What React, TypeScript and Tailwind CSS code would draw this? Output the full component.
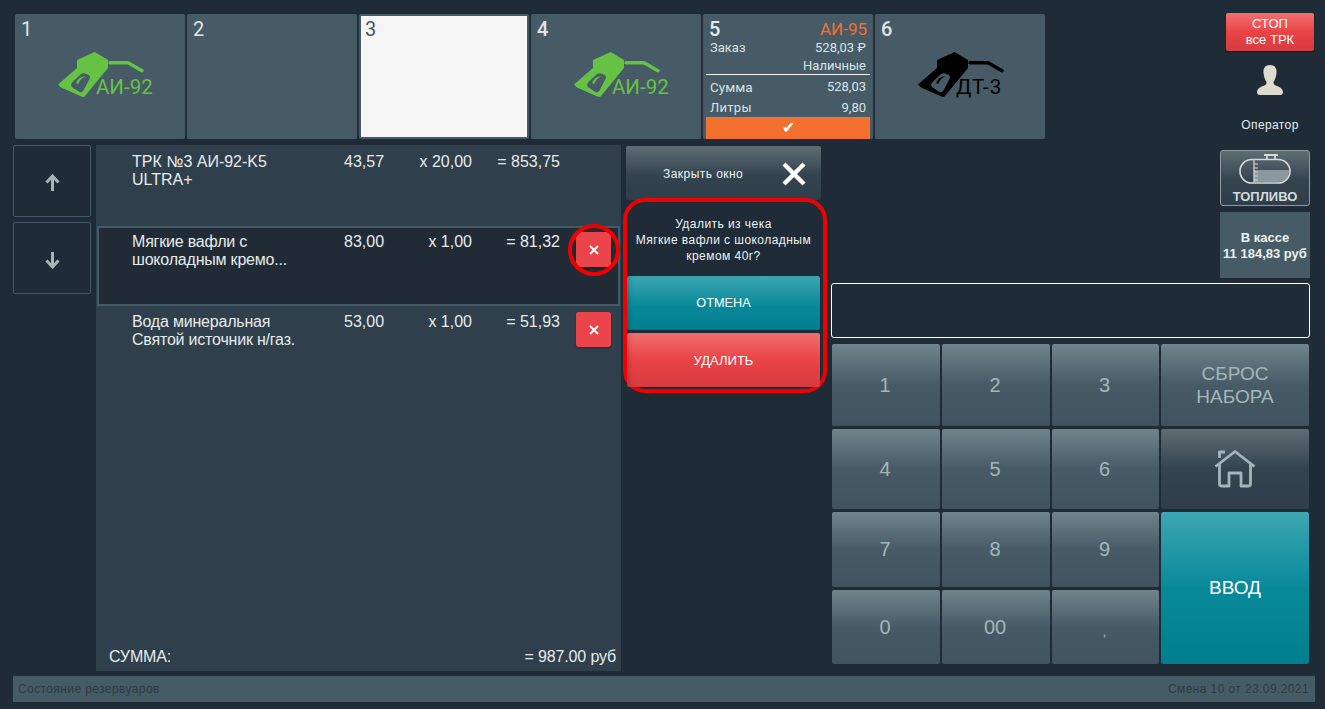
import React from "react";

const numBtn =
  "flex items-center justify-center rounded-[2px] bg-[linear-gradient(180deg,#70848b_0%,#465b66_50%,#40535f_100%)] pr-[2px] text-[#a3b6ba] text-[20px]";

function Nozzle({ color, hole }: { color: string; hole: string }) {
  return (
    <svg viewBox="0 0 86 46" className="h-[46px] w-[86px]">
      <path
        d="M36.700 0 L50 8 L50 16 L27 44 Q25.500 45.500 23.500 44.500 L3 35.500 L0 32.500 L19 16 L19 8 Z"
        fill={color}
      />
      <path
        d="M14 30.500 L22.500 22.500 Q24.500 20.500 27.500 21.500 L30.500 23 Q33 24.500 31.500 27 L25.500 38.500 Q24 41 21.500 40 L14.500 35.500 Q12 33 14 30.500 Z"
        fill={hole}
      />
      <path d="M18 31 Q20.500 24.500 27.500 24 Q22.500 26.500 20 32 Z" fill={color} />
      <path d="M52 10.700 H70 L84 18.700" fill="none" stroke={color} strokeWidth="3.400" strokeLinecap="round" />
    </svg>
  );
}

function FuelTile({
  n,
  label,
  color,
  labelCls,
  numCls,
}: {
  n: string;
  label: string;
  color: string;
  labelCls: string;
  numCls: string;
}) {
  return (
    <div className="relative h-[125px] w-[170px] rounded-[2px] bg-[#465b66]">
      <div className={`pl-[6px] pt-[3px] text-[20px] leading-[24px] text-[#dfe5e7] ${numCls}`}>{n}</div>
      <div className="flex pl-[43px] pt-[11px]">
        <Nozzle color={color} hole="#465b66" />
      </div>
      <div className={`absolute left-[81px] top-[61px] text-[20.500px] leading-[24px] ${labelCls}`}>{label}</div>
    </div>
  );
}

function ActiveTile() {
  return (
    <div className="flex h-[125px] w-[170px] flex-col rounded-[2px] bg-[#465b66] px-[3px] text-[13px] text-[#dbe2e4]">
      <div className="flex h-[26px] items-start justify-between pl-[3px] pr-[3px] pt-[3px] leading-[24px]">
        <span className="text-[20px] font-medium text-[#e6ebec]">5</span>
        <span className="text-[17px] text-[#f3702f]">АИ-95</span>
      </div>
      <div className="flex justify-between pl-[4px] pr-[4px] pt-[0px] text-[13px] leading-[16px]">
        <span>Заказ</span>
        <span>528,03 ₽</span>
      </div>
      <div className="h-[18px] pr-[4px] pt-[2px] text-right leading-[16px]">Наличные</div>
      <div className="h-[1px] bg-[#f2f5f6]" />
      <div className="flex justify-between pl-[4px] pr-[4px] pt-[4px] leading-[16px]">
        <span className="text-[13.500px]">Сумма</span>
        <span>528,03</span>
      </div>
      <div className="flex justify-between pl-[4px] pr-[4px] pt-[5px] leading-[16px]">
        <span className="tracking-[0.3px]">Литры</span>
        <span>9,80</span>
      </div>
      <div className="mt-auto flex h-[22px] items-center justify-center bg-[#f3702f] text-[16px] leading-none text-white">✔</div>
    </div>
  );
}

function XButton() {
  return (
    <div className="flex h-[35px] w-[35px] items-center justify-center rounded-[3px] bg-[#e9454a] shadow-[0_1px_2px_rgba(0,0,0,0.3)]">
      <svg viewBox="0 0 10 10" className="h-[10px] w-[10px]">
        <path d="M1 1 L9 9 M9 1 L1 9" stroke="#ffffff" strokeWidth="2" fill="none" />
      </svg>
    </div>
  );
}

function Row({
  name,
  nameCls,
  price,
  qty,
  sum,
  del,
  circled,
  selected,
  box,
}: {
  name: string[];
  nameCls: string;
  price: string;
  qty: string;
  sum: string;
  del?: boolean;
  circled?: boolean;
  selected?: boolean;
  box: string;
}) {
  return (
    <div
      className={`flex items-start text-[16px] leading-[18px] text-[#e6ebec] ${box} ${
        selected ? "mx-[1px] border-2 border-[#445a66] bg-[#212b36] pl-[33px]" : "pl-[36px]"
      }`}
    >
      <div className={`w-[212px] ${nameCls}`}>
        {name.map((l) => (
          <div key={l} className="whitespace-nowrap">
            {l}
          </div>
        ))}
      </div>
      <div className="w-[50px]">{price}</div>
      <div className="w-[78px] text-right">{qty}</div>
      <div className="w-[88px] text-right">{sum}</div>
      {del && (
        <div className="relative -mt-[1px] ml-[16px]">
          <XButton />
          {circled && (
            <div className="absolute -left-[8px] -top-[8px] h-[52px] w-[52px] rounded-full border-[4px] border-[#f00000]" />
          )}
        </div>
      )}
    </div>
  );
}

function ArrowBtn({ up }: { up?: boolean }) {
  return (
    <div
      className={`flex h-[72px] w-[78px] items-center justify-center rounded-[2px] border border-[#445a66] ${
        up ? "pt-[2px]" : "pt-[5px]"
      }`}
    >
      <svg viewBox="0 0 15 17" className="h-[17px] w-[15px]">
        <path
          d={up ? "M7.500 17 V3 M1.500 8.500 L7.500 2 L13.500 8.500" : "M7.500 0 V14 M1.500 8.500 L7.500 15 L13.500 8.500"}
          fill="none"
          stroke="#a5b5ba"
          strokeWidth="3"
        />
      </svg>
    </div>
  );
}

function Tank() {
  return (
    <svg viewBox="0 0 52 30" className="h-[30px] w-[52px]">
      <path d="M15 16 H50 Q50 28 39 28 H15 Z" fill="#8b989d" />
      <rect x="1" y="5.500" width="50" height="23.500" rx="11.700" fill="none" stroke="#d6dadb" strokeWidth="1.600" />
      <path d="M25 1 H39 M28 1 V5.500 M36 1 V5.500" stroke="#d6dadb" strokeWidth="1.800" fill="none" />
      <path d="M15 6 V29 M15 10 H19 M15 14 H19 M15 18 H19 M15 22 H19 M15 26 H19" stroke="#d6dadb" strokeWidth="1.200" fill="none" />
    </svg>
  );
}

function Person() {
  return (
    <svg viewBox="0 0 26 31" className="h-[31px] w-[26px]">
      <path
        d="M13 0 C8 0 6 3.500 6.500 8 C7 12 8 15 9.500 17 C9.500 19 9 20 6 21 C2 22.500 0.500 24 0 27 Q0 30 3 30 H23 Q26 30 26 27 C25.500 24 24 22.500 20 21 C17 20 16.500 19 16.500 17 C18 15 19 12 19.500 8 C20 3.500 18 0 13 0 Z"
        fill="#dedccf"
      />
    </svg>
  );
}

function Home() {
  return (
    <svg viewBox="0 0 42 38" className="h-[38px] w-[42px]">
      <g fill="none" stroke="#a3b6ba" strokeWidth="2.800" strokeLinejoin="round">
        <path d="M1.500 16.500 L21 1.500 L40.500 16.500" />
        <path d="M5.500 8 V2 H11" />
        <path d="M5.500 13 V34 Q5.500 36 8 36 H15 V23 H27 V36 H34 Q36.500 36 36.500 34 V13" />
      </g>
    </svg>
  );
}

export default function App() {
  return (
    <div className="flex h-[709px] w-[1325px] flex-col overflow-hidden bg-[#1f2b36] font-['Liberation_Sans',Arial,sans-serif]">
      {/* top */}
      <div className="flex h-[145px] pl-[15px] pr-[11px] pt-[14px]">
        <div className="flex gap-[2px] font-['Roboto',sans-serif]">
          <FuelTile n="1" label="АИ-92" color="#65c245" labelCls="text-[#65c245]" numCls="" />
          <div className="h-[125px] w-[170px] rounded-[2px] bg-[#465b66] pl-[6px] pt-[3px] text-[20px] leading-[24px] text-[#dfe5e7]">2</div>
          <div className="h-[125px] w-[170px] rounded-[2px] border-2 border-[#465b66] bg-[#f5f5f5] pl-[4px] pt-[1px] text-[20px] leading-[24px] text-[#465b66]">3</div>
          <FuelTile n="4" label="АИ-92" color="#65c245" labelCls="text-[#65c245]" numCls="font-medium" />
          <ActiveTile />
          <FuelTile n="6" label="ДТ-3" color="#000000" labelCls="text-[#000000] tracking-[1px]" numCls="font-medium" />
        </div>
        <div className="ml-auto flex w-[88px] flex-col items-center -mt-[1px]">
          <div className="flex h-[38px] w-[88px] flex-col items-center justify-center rounded-[2px] bg-[linear-gradient(180deg,#f2706f_0%,#ea4345_50%,#d63c40_100%)] text-[13px] leading-[16px] text-white shadow-[0_1px_2px_rgba(0,0,0,0.4)]">
            <span>СТОП</span>
            <span>все ТРК</span>
          </div>
          <div className="mt-[14px]">
            <Person />
          </div>
          <div className="mt-[21px] text-[12px] leading-[16px] tracking-[0.4px] text-[#e6ebec]">Оператор</div>
        </div>
      </div>

      {/* main */}
      <div className="flex h-[526px]">
        <div className="ml-[13px] flex w-[78px] flex-col gap-[5px]">
          <ArrowBtn up />
          <ArrowBtn />
        </div>

        <div className="ml-[5px] flex w-[525px] flex-col bg-[#2f3f4b]">
          <div className="flex-1">
            <Row box="h-[81px] pt-[8px]" nameCls="" name={["ТРК №3 АИ-92-K5", "ULTRA+"]} price="43,57" qty="x 20,00" sum="= 853,75" />
            <Row box="h-[80px] pt-[5px]" nameCls="tracking-[-0.2px]" selected del circled name={["Мягкие вафли с", "шоколадным кремо..."]} price="83,00" qty="x 1,00" sum="= 81,32" />
            <Row box="h-[80px] pt-[7px]" nameCls="tracking-[-0.2px]" del name={["Вода минеральная", "Святой источник н/газ."]} price="53,00" qty="x 1,00" sum="= 51,93" />
          </div>
          <div className="flex h-[30px] items-center justify-between pl-[13px] pr-[5px] pt-[1px] text-[16px] tracking-[-0.15px] text-[#e6ebec]">
            <span>СУММА:</span>
            <span>= 987.00 руб</span>
          </div>
        </div>

        <div className="ml-[2px] flex w-[203px] flex-col">
          <div className="mx-[3px] mt-[1px] flex h-[54px] w-[195px] items-center rounded-[2px] bg-[linear-gradient(180deg,#5f6c73_0%,#33444f_55%,#2f3e4a_100%)] pl-[37px] pt-[1px] text-[12px] tracking-[0.45px] text-[#eef1f2]">
            <span className="w-[119px]">Закрыть окно</span>
            <svg viewBox="0 0 24 24" className="h-[24px] w-[24px]">
              <path d="M2 2 L22 22 M22 2 L2 22" stroke="#ffffff" strokeWidth="4.400" fill="none" />
            </svg>
          </div>
          <div className="-mt-[2px] h-[195px] w-[204px] rounded-[22px] border-[4px] border-[#f00000]">
            <div className="flex h-[74px] flex-col justify-center pr-[3px] pt-[2px] text-center text-[12px] leading-[16px] tracking-[0.45px] text-[#eef1f2]">
              <div>Удалить из чека</div>
              <div>Мягкие вафли с шоколадным</div>
              <div>кремом 40г?</div>
            </div>
            <div className="flex h-[54px] w-[193px] items-center justify-center rounded-[2px] bg-[linear-gradient(180deg,#3ea6b2_0%,#08899a_55%,#007f8e_100%)] pt-[1px] text-[12.700px] text-white shadow-[inset_4px_0_4px_-2px_rgba(0,0,0,0.2)]">
              ОТМЕНА
            </div>
            <div className="mt-[3px] flex h-[54px] w-[193px] items-center justify-center rounded-[2px] bg-[linear-gradient(180deg,#f2706f_0%,#ea4345_50%,#d63c40_100%)] pt-[1px] text-[13px] text-white shadow-[inset_4px_0_4px_-2px_rgba(0,0,0,0.2)]">
              УДАЛИТЬ
            </div>
          </div>
        </div>

        <div className="ml-[5px] flex w-[479px] flex-col">
          <div className="flex h-[138px] flex-col items-end pt-[5px]">
            <div className="flex h-[56px] w-[90px] flex-col items-center rounded-[3px] border border-[#8f9a9f] bg-[linear-gradient(180deg,#5f6c73_0%,#33444f_55%,#2f3e4a_100%)] pt-[3px]">
              <Tank />
              <div className="mt-[5px] text-[13px] font-bold leading-[15px] text-[#d6dadb]">ТОПЛИВО</div>
            </div>
            <div className="mt-[6px] flex h-[66px] w-[90px] flex-col items-center justify-center bg-[#465b66] pt-[2px] text-[13px] font-bold leading-[16px] text-[#eef1f2]">
              <span>В кассе</span>
              <span className="whitespace-nowrap">11 184,83 руб</span>
            </div>
          </div>
          <div className="h-[55px] rounded-[3px] border border-white" />
          <div className="ml-[1px] mt-[6px] grid w-[477px] grid-cols-[108px_108px_107px_148px] grid-rows-[82px_80px_75px_74px] gap-x-[2px] gap-y-[3px]">
            <div className={numBtn}>1</div>
            <div className={numBtn}>2</div>
            <div className={numBtn}>3</div>
            <div className={`${numBtn} flex-col !pr-[0px] !text-[19px] leading-[23px]`}>
              <span>СБРОС</span>
              <span>НАБОРА</span>
            </div>
            <div className={numBtn}>4</div>
            <div className={numBtn}>5</div>
            <div className={numBtn}>6</div>
            <div className="flex items-center justify-center rounded-[2px] bg-[linear-gradient(180deg,#5f6c73_0%,#33444f_50%,#2f3e4a_100%)]">
              <Home />
            </div>
            <div className={`${numBtn} pb-[2px]`}>7</div>
            <div className={`${numBtn} pb-[2px]`}>8</div>
            <div className={`${numBtn} pb-[2px]`}>9</div>
            <div className="row-span-2 flex items-center justify-center rounded-[2px] bg-[linear-gradient(180deg,#3ea6b2_0%,#08899a_50%,#007f8e_100%)] text-[19px] text-white">
              ВВОД
            </div>
            <div className={numBtn}>0</div>
            <div className={numBtn}>00</div>
            <div className={`${numBtn} !text-[14px] pt-[8px]`}>,</div>
          </div>
        </div>
      </div>

      {/* status */}
      <div className="ml-[13px] mt-[5px] flex h-[26px] w-[1302px] items-center justify-between bg-[#465b66] pl-[5px] pr-[6px] text-[12px] tracking-[0.4px] text-[#2f3a42]">
        <span>Состояние резервуаров</span>
        <span>Смена 10 от 23.09.2021</span>
      </div>
    </div>
  );
}
